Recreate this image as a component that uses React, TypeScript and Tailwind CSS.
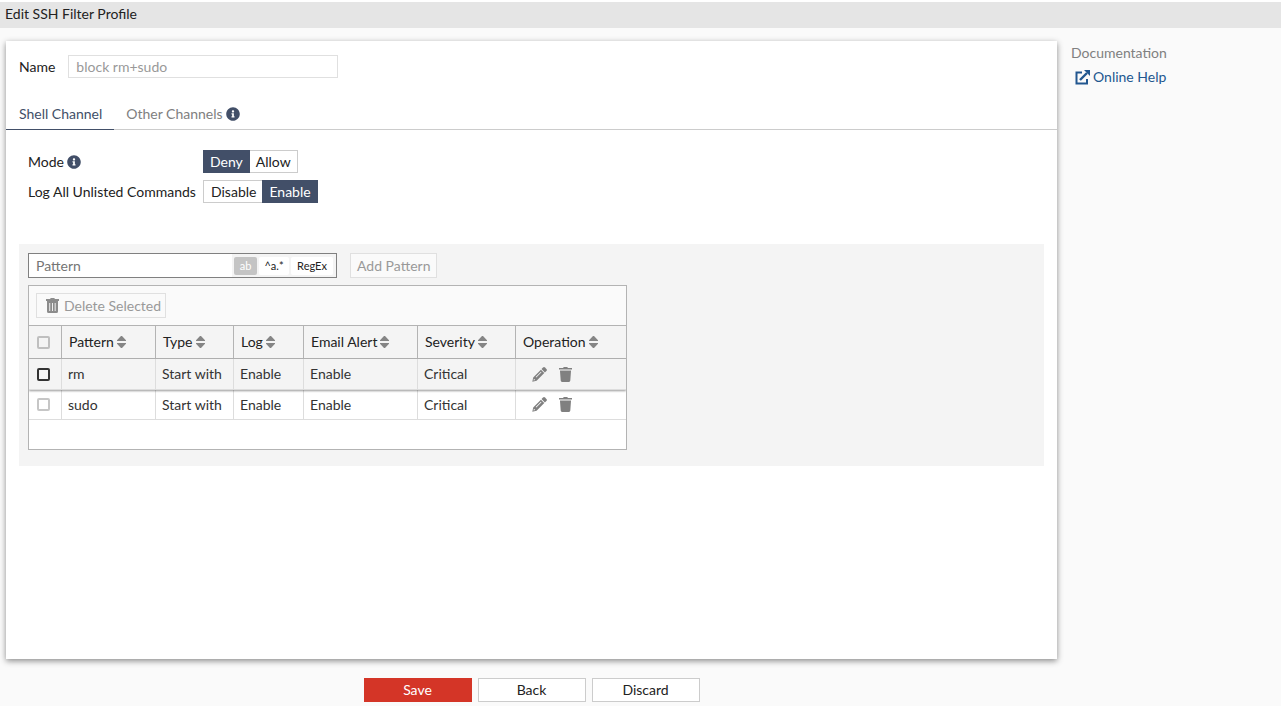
import { useState } from 'react';
import type { ReactNode } from 'react';
import { FaInfoCircle } from 'react-icons/fa';

// ---- types ----
type PatternRow = {
  id: string;
  pattern: string;
  type: string;
  log: string;
  email: string;
  severity: string;
};

const ROWS: PatternRow[] = [
  { id: 'rm', pattern: 'rm', type: 'Start with', log: 'Enable', email: 'Enable', severity: 'Critical' },
  { id: 'sudo', pattern: 'sudo', type: 'Start with', log: 'Enable', email: 'Enable', severity: 'Critical' },
];

const COLUMNS = [
  { label: 'Pattern', className: 'w-[94px]' },
  { label: 'Type', className: 'w-[78px]' },
  { label: 'Log', className: 'w-[70px]' },
  { label: 'Email Alert', className: 'w-[114px]' },
  { label: 'Severity', className: 'w-[98px]' },
  { label: 'Operation', className: 'w-[110px]' },
];

// ---- icons ----
function SortIcon() {
  return (
    <svg width="9" height="12" viewBox="0 0 9 12" fill="#858585" aria-hidden>
      <path d="M4 0h1l4 4.200V5H0v-.8zM0 7h9v.8L5 12H4L0 7.800z" />
    </svg>
  );
}

function PencilIcon() {
  return (
    <svg width="15" height="15" viewBox="0 0 15 15" fill="#808080" aria-hidden>
      <path d="M11 .6a1.500 1.500 0 0 1 2.100 0l1.300 1.300a1.500 1.500 0 0 1 0 2.100L12.900 5.500 9.500 2.100z" />
      <path fillRule="evenodd" d="M8.900 2.700 12.300 6.100 4.600 13.800.3 14.700 1.200 10.400zM8.900 4.700 3.700 9.900l.6.6L9.500 5.300zM1.900 11.800l-.4 1.700 1.700-.4z" />
    </svg>
  );
}

function TrashIcon() {
  return (
    <svg width="13" height="15" viewBox="0 0 13 15" aria-hidden>
      <path fill="#808080" d="M0 1h4l.8-1h3.400L9 1h4v1.500H0zM1 4h11l-.7 9.600a1.400 1.400 0 0 1-1.400 1.400H3.100a1.400 1.400 0 0 1-1.400-1.400z" />
      <path fill="#c0c0c0" d="M1 2.500h11V4H1z" />
    </svg>
  );
}

function TrashStripedIcon() {
  return (
    <svg width="13" height="15" viewBox="0 0 13 15" fill="#8c8c8c" aria-hidden>
      <path d="M0 1h4l.8-1h3.400L9 1h4v2H0z" />
      <path fillRule="evenodd" d="M1 3h11v10.500a1.500 1.500 0 0 1-1.500 1.500h-8A1.500 1.500 0 0 1 1 13.500zM3.300 5v8h.9V5zM6 5v8h.9V5zM8.700 5v8h.9V5z" />
    </svg>
  );
}

function ExternalIcon() {
  return (
    <svg width="15" height="15" viewBox="0 0 15 15" fill="none" stroke="#22578f" strokeWidth="2" aria-hidden>
      <path d="M7 2.500H1.500V13.500H12V9" />
      <path d="M5 10 12 3" strokeWidth="2.400" />
      <path d="M9 0h6v6z" fill="#22578f" stroke="none" />
    </svg>
  );
}

// ---- sub-components ----
function Toggle({ label, options, value, onChange }: {
  label: ReactNode;
  options: string[];
  value: string;
  onChange: (v: string) => void;
}) {
  return (
    <div className="flex items-center">
      <span className="flex w-[175px] items-center gap-[3px]">{label}</span>
      <div className="flex">
        {options.map((o) => (
          <button
            key={o}
            type="button"
            aria-pressed={o === value}
            onClick={() => onChange(o)}
            className={`h-[23px] border px-[6px] leading-5 ${
              o === value
                ? 'border-[#424f68] bg-[#424f68] text-white'
                : 'border-[#cccccc] bg-white first:border-r-0 first:pl-[7px] last:border-l-0'
            }`}
          >
            {o}
          </button>
        ))}
      </div>
    </div>
  );
}

function CheckBox({ label, className }: { label: string; className: string }) {
  return (
    <input
      type="checkbox"
      aria-label={label}
      className={`block size-[13px] appearance-none rounded-[2px] border-2 checked:bg-[#424f68] ${className}`}
    />
  );
}

function PatternTable() {
  return (
    <div className="mt-[7px] w-[599px] overflow-hidden border border-[#b3b3b3] bg-white pb-[29px]">
      <div className="border-b border-[#b3b3b3] bg-[#fafafa] p-[7px]">
        <button type="button" className="flex h-[25px] items-center gap-[5px] border border-[#e0e0e0] pr-1 pl-[9px] text-[#999999]">
          <TrashStripedIcon />
          Delete Selected
        </button>
      </div>
      <table className="w-full table-fixed border-separate border-spacing-0">
        <thead>
          <tr className="h-[33px] bg-[#f4f4f4]">
            <th className="w-[33px] border-r border-b border-[#b3b3b3] pl-2">
              <CheckBox label="Select all" className="border-[#bfbfbf]" />
            </th>
            {COLUMNS.map((c) => (
              <th
                key={c.label}
                className={`border-r border-b border-[#b3b3b3] pl-[7px] text-left font-normal last:border-r-0 ${c.className}`}
              >
                <span className="flex items-center gap-[3px]">
                  {c.label}
                  <SortIcon />
                </span>
              </th>
            ))}
          </tr>
        </thead>
        <tbody className="text-[#333333] [&_td]:border-b [&_td]:border-r [&_td]:border-[#dddddd] [&_td:last-child]:border-r-0">
          {ROWS.map((r, i) => (
            <tr
              key={r.id}
              className={i === 0 ? 'relative h-[31px] bg-[#f4f4f4] shadow-[0_1px_2px_rgba(0,0,0,0.4)]' : 'h-[30px]'}
            >
              <td className="pl-2">
                <CheckBox label={`Select ${r.pattern}`} className={i === 0 ? 'border-[#333333]' : 'border-[#c6c6c6]'} />
              </td>
              <td className="pl-[6px]">{r.pattern}</td>
              <td className="pl-[6px]">{r.type}</td>
              <td className="pl-[6px]">{r.log}</td>
              <td className="pl-[6px]">{r.email}</td>
              <td className="pl-[6px]">{r.severity}</td>
              <td className="pl-4">
                <div className="flex items-center gap-3">
                  <button type="button" aria-label={`Edit ${r.pattern}`}><PencilIcon /></button>
                  <button type="button" aria-label={`Delete ${r.pattern}`}><TrashIcon /></button>
                </div>
              </td>
            </tr>
          ))}
        </tbody>
      </table>
    </div>
  );
}

function PatternPanel() {
  return (
    <section className="mx-[13px] mt-[41px] bg-[#f4f4f4] px-[9px] pt-[9px] pb-4">
      <div className="flex gap-[13px]">
        <div className="flex h-[25px] w-[309px] border border-[#808080] bg-[#f4f4f4]">
          <input
            type="text"
            aria-label="Pattern"
            placeholder="Pattern"
            className="min-w-0 flex-1 bg-white px-[7px] outline-none placeholder:text-[#757575]"
          />
          <div className="flex items-center gap-[2px] pr-[3px] pl-[2px] text-[11px] leading-4">
            <button type="button" className="h-[18px] w-[23px] rounded-[2px] bg-[#c4c4c4] text-white">ab</button>
            <button type="button" className="h-[18px] w-[30px] rounded-[2px] bg-white">^a.*</button>
            <button type="button" className="h-[18px] w-[42px] rounded-[2px] bg-white">RegEx</button>
          </div>
        </div>
        <button type="button" className="h-[25px] border border-[#e0e0e0] bg-[#fafafa] px-[6px] text-[#999999]">
          Add Pattern
        </button>
      </div>
      <PatternTable />
    </section>
  );
}

// ---- main export ----
export default function App() {
  const [mode, setMode] = useState('Deny');
  const [logAll, setLogAll] = useState('Enable');

  return (
    <div className="flex min-h-screen flex-col bg-white py-[2px] font-[Lato,sans-serif] text-sm text-[#222222]">
      <header className="bg-[#e5e5e5] px-[5px] pt-[2px] pb-1">
        <h1>Edit SSH Filter Profile</h1>
      </header>

      <div className="flex flex-1 bg-[#fafafa] pt-[13px]">
        <main className="flex min-w-0 flex-1 flex-col pl-[6px]">
          <div className="flex-1 bg-white pt-[14px] shadow-[0_2px_6px_rgba(0,0,0,0.45)]">
            <div className="flex items-center gap-[13px] px-[13px]">
              <label htmlFor="profile-name">Name</label>
              <input
                id="profile-name"
                type="text"
                defaultValue="block rm+sudo"
                readOnly
                className="h-[23px] w-[270px] border border-[#e0e0e0] px-[7px] text-[#999999] outline-none"
              />
            </div>

            <nav className="mt-5 flex border-b border-[#cccccc]" role="tablist">
              <button type="button" role="tab" aria-selected className="-mb-px h-8 border-b border-[#424f68] pr-3 pl-[13px] text-[#424f68]">
                Shell Channel
              </button>
              <button type="button" role="tab" aria-selected={false} className="flex items-center gap-[3px] px-3 text-[#808080]">
                Other Channels
                <FaInfoCircle className="size-[14px] text-[#424f68]" />
              </button>
            </nav>

            <div className="flex flex-col gap-[7px] px-[22px] pt-5">
              <Toggle
                label={<>Mode <FaInfoCircle className="size-[14px] text-[#424f68]" /></>}
                options={['Deny', 'Allow']}
                value={mode}
                onChange={setMode}
              />
              <Toggle
                label="Log All Unlisted Commands"
                options={['Disable', 'Enable']}
                value={logAll}
                onChange={setLogAll}
              />
            </div>

            <PatternPanel />
          </div>

          <footer className="flex justify-center gap-[6px] pt-[19px] pb-1">
            <button type="submit" className="h-6 w-[108px] border border-[#d43527] bg-[#d43527] text-white">Save</button>
            <button type="button" className="h-6 w-[108px] border border-[#cccccc] bg-white">Back</button>
            <button type="button" className="h-6 w-[108px] border border-[#cccccc] bg-white">Discard</button>
          </footer>
        </main>

        <aside className="flex w-56 flex-col gap-1 pt-[2px] pl-[14px]">
          <h2 className="text-[#808080]">Documentation</h2>
          <a href="#help" className="flex items-center gap-[3px] pl-1 text-[#22578f]">
            <ExternalIcon />
            Online Help
          </a>
        </aside>
      </div>
    </div>
  );
}
